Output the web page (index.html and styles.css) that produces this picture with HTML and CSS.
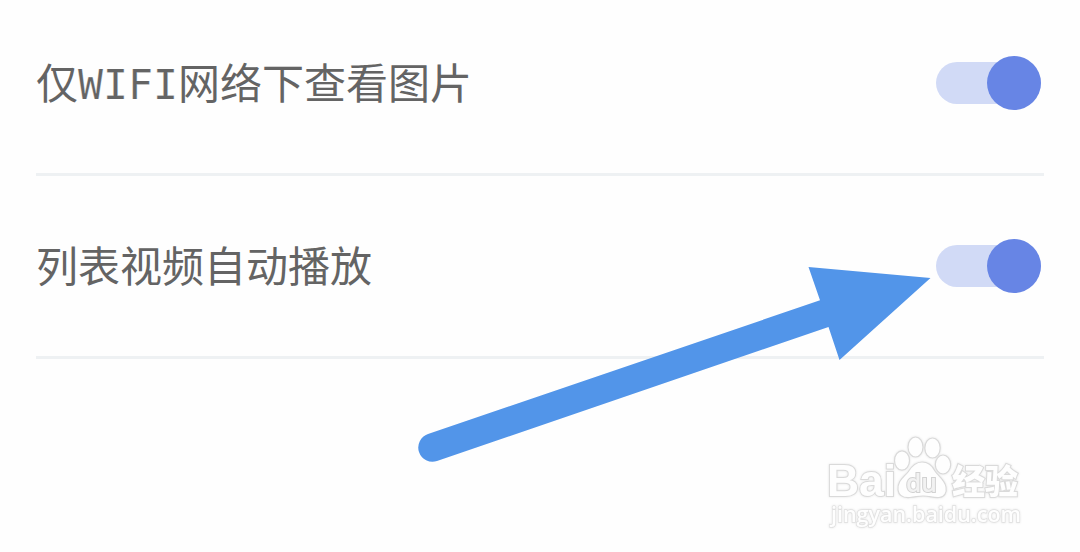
FILE: index.html
```html
<!DOCTYPE html>
<html lang="zh-CN">
<head>
    <meta charset="UTF-8">
    <meta name="viewport" content="width=device-width, initial-scale=1.0">
    <title>设置</title>
    <link rel="stylesheet" href="styles.css">
</head>
<body>
    <div class="settings">
        <div class="row">
            <span class="label">仅<span class="latin">WIFI</span>网络下查看图片</span>
            <div class="switch"><div class="knob"></div></div>
        </div>
        <div class="row">
            <span class="label">列表视频自动播放</span>
            <div class="switch"><div class="knob"></div></div>
        </div>
    </div>

    <!-- Arrow pointing at the second switch -->
    <svg class="arrow" width="520" height="205" viewBox="0 0 520 205">
        <path d="M18 174 L410 40.3 L398.5 7 L520.500 18 L429.5 100 L418.5 67 L27 201 A14 14 0 0 1 18 174 Z"/>
    </svg>

    <svg class="watermark" width="210" height="106" viewBox="0 0 210 106">
        <g class="paw">
            <ellipse cx="82" cy="30.500" rx="7.500" ry="9.700"/>
            <ellipse cx="95.500" cy="17" rx="7.500" ry="10"/>
            <ellipse cx="112.500" cy="18" rx="7.700" ry="10"/>
            <ellipse cx="123" cy="34.500" rx="7.700" ry="9.500"/>
            <path d="M102 32 C95 32 91 37 88 42 C84 47 77 51 78 60 C79 67 84 68 90 67.500 C96 67 98 66 103 66 C110 66 113 68 119 67.500 C125 67 127 62 126 57 C125 50 118 46 115 41 C112 35 108 32 102 32 Z"/>
        </g>
        <text class="brand" x="7" y="66" textLength="69" lengthAdjust="spacingAndGlyphs">Bai</text>
        <text class="du" x="86" y="61.500" textLength="31" lengthAdjust="spacingAndGlyphs">du</text>
        <text class="jingyan" x="132" y="64" textLength="66" lengthAdjust="spacingAndGlyphs">经验</text>
        <text class="site" x="11" y="92" textLength="190" lengthAdjust="spacingAndGlyphs">jingyan.baidu.com</text>
    </svg>
</body>
</html>
```

FILE: styles.css
```css
body {
    font-family: "Noto Sans CJK SC", sans-serif;
    margin: 0;
    padding: 0;
    height: 552px;
    background-color: #fefefe;
    color: #646464;
    position: relative;
    overflow: hidden;
}
.settings {
    margin: 0 36px;
    padding-top: 1px;
}
.row {
    display: flex;
    align-items: center;
    justify-content: space-between;
    height: 180px;
    border-bottom: 3px solid #eef1f3;
}
.row:first-child {
    margin-top: -8px;
}
.label {
    font-size: 42px;
    line-height: 60px;
    padding-bottom: 4px;
}
.latin {
    font-family: "DejaVu Sans Mono", monospace;
    font-size: 41.5px;
    line-height: 1;
    -webkit-text-stroke: 0.2px #fefefe;
}
.switch {
    display: flex;
    align-items: center;
    justify-content: flex-end;
    width: 105px;
    height: 42px;
    margin-right: 3px;
    border-radius: 21px;
    background-color: #d1daf6;
}
.knob {
    flex: none;
    width: 54px;
    height: 54px;
    border-radius: 50%;
    background-color: #6785e5;
}
.arrow {
    position: absolute;
    left: 409.5px;
    top: 260px;
    fill: #5295e9;
    overflow: visible;
}
.watermark {
    position: absolute;
    left: 820px;
    top: 430px;
    filter: drop-shadow(0 0 1px #e4e4e4);
}
.watermark text,
.paw {
    fill: #fefefe;
    stroke: #dadada;
    stroke-width: 1.2px;
}
.watermark text {
    font-family: "Liberation Sans", sans-serif;
    font-weight: bold;
    paint-order: stroke;
    stroke-width: 2px;
}
.watermark .brand {
    font-size: 44px;
}
.watermark .du {
    font-family: "Open Sans", sans-serif;
    font-size: 25px;
    font-weight: 600;
    fill: #f2f2f2;
    stroke: #d2d2d2;
}
.watermark .jingyan {
    font-family: "Noto Sans CJK SC", sans-serif;
    font-size: 34px;
    font-weight: 900;
}
.watermark .site {
    font-family: "Open Sans", sans-serif;
    font-size: 22px;
    font-weight: 600;
    stroke: #e0e0e0;
    stroke-width: 1.5px;
}
```
